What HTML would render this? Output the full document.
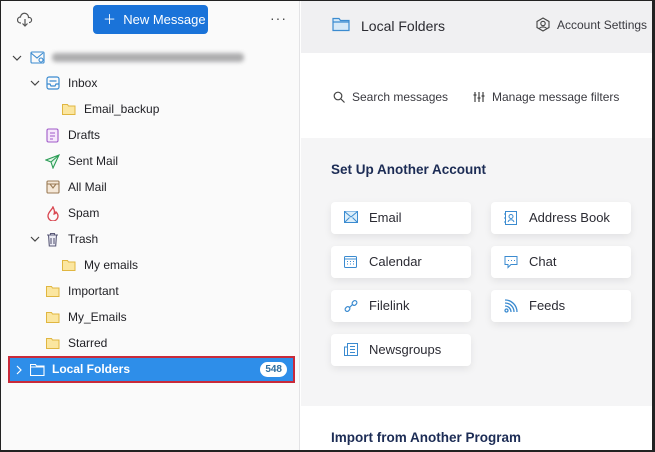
<!DOCTYPE html>
<html><head><style>
*{margin:0;padding:0;box-sizing:border-box}
body{width:655px;height:452px;overflow:hidden;font-family:"Liberation Sans",sans-serif;background:#fff;position:relative}
.frame{position:absolute;inset:0;border:1px solid #222;border-right:3px solid #222;border-bottom:2px solid #222;pointer-events:none;z-index:10}
.left{position:absolute;left:0;top:0;width:300px;height:452px;background:#fafafa;border-right:1px solid #e3e3e5}
.btn{position:absolute;left:93px;top:5px;width:115px;height:29px;background:#1a73d9;border-radius:4px;color:#fff;font-size:13px;line-height:29px;padding-left:10px}
.row{position:absolute;height:20px;font-size:12px;color:#1f1f24;line-height:20px;white-space:nowrap}
.ch{position:absolute}
.sel{position:absolute;left:8px;top:356px;width:287px;height:27px;background:#2e8ee9;border:2px solid #c92a3a;color:#fff;font-weight:bold;font-size:12px;line-height:23px}
.badge{position:absolute;right:6px;top:4px;background:#fff;color:#2e6ea0;border-radius:8px;font-size:10px;line-height:15px;padding:0 5px;font-weight:bold}
.right{position:absolute;left:301px;top:0;width:354px;height:452px}
.hdr{position:absolute;left:0;top:0;width:354px;height:53px;background:#f0f0f2}
.g{position:absolute;left:0;top:138px;width:354px;height:268px;background:#f5f5f6}
.t{position:absolute;font-size:12px;color:#3a3a40;white-space:nowrap}
.card{position:absolute;width:140px;height:32px;background:#fff;border-radius:4px;box-shadow:0 3px 8px rgba(0,0,0,.08);font-size:13px;color:#2b2b33;line-height:32px;padding-left:38px}
.card svg{position:absolute;left:13px;top:9px}
.h2{position:absolute;font-size:13.5px;font-weight:bold;color:#1c2c55;white-space:nowrap}
</style></head><body>
<div class="left">
<svg style="position:absolute;left:17px;top:12px" width="16" height="16" viewBox="0 0 16 16" fill="none" stroke="#555" stroke-width="1.2"><path d="M4 11H3.5a3 3 0 0 1 0-6 4 4 0 0 1 8 0.5 2.5 2.5 0 0 1 1 5H12"/><path d="M8 7v7M5.5 11.5 8 14l2.5-2.5"/></svg>
<div class="btn">＋&nbsp; New Message</div>
<div style="position:absolute;left:270px;top:10px;font-size:14px;color:#444;letter-spacing:1px">···</div>

<svg class="ch" style="left:12px;top:55px" width="10" height="6" viewBox="0 0 10 6" fill="none" stroke="#444" stroke-width="1.2"><path d="M1 1l4 4 4-4"/></svg>
<svg style="position:absolute;left:30px;top:51px" width="16" height="14" viewBox="0 0 16 14" fill="none" stroke="#3b8bd0" stroke-width="1.1"><rect x="1" y="1" width="13" height="11" rx="1"/><path d="M1 2l6 5 6-5"/><circle cx="11" cy="9" r="2"/></svg>
<div style="position:absolute;left:52px;top:53px;width:192px;height:9px;background:#9a9a9c;filter:blur(2px);border-radius:4px;opacity:.8"></div>

<svg class="ch" style="left:30px;top:80px" width="10" height="6" viewBox="0 0 10 6" fill="none" stroke="#444" stroke-width="1.2"><path d="M1 1l4 4 4-4"/></svg>
<svg style="position:absolute;left:46px;top:76px" width="14" height="14" viewBox="0 0 14 14" fill="none" stroke="#3b8bd0" stroke-width="1.2"><rect x="1" y="1" width="12" height="12" rx="2"/><path d="M1 8h3l1 2h4l1-2h3M3.5 5h7"/></svg>
<div class="row" style="left:68px;top:73px">Inbox</div>

<svg style="position:absolute;left:62px;top:103px" width="14" height="12" viewBox="0 0 14 12" fill="#fbe6a0" stroke="#e0b640"><path d="M.5 1.5h5l1 1.5h6.5v8.5H.5z"/></svg>
<div class="row" style="left:84px;top:99px">Email_backup</div>

<svg style="position:absolute;left:46px;top:128px" width="13" height="15" viewBox="0 0 13 15" fill="#f6e8fb" stroke="#a05ac8" stroke-width="1.1"><rect x="1" y="1" width="11" height="13" rx="1.5"/><path d="M4 5h5M4 8h5M4 11h3"/></svg>
<div class="row" style="left:68px;top:125px">Drafts</div>

<svg style="position:absolute;left:45px;top:154px" width="15" height="15" viewBox="0 0 15 15" fill="#e3f6ea" stroke="#2a9c55" stroke-width="1.1"><path d="M14 1 1 6l5 2 2 6z M6 8l8-7"/></svg>
<div class="row" style="left:68px;top:151px">Sent Mail</div>

<svg style="position:absolute;left:46px;top:180px" width="14" height="14" viewBox="0 0 14 14" fill="#f5e8d8" stroke="#9a7a55" stroke-width="1.1"><rect x="1" y="1" width="12" height="12" rx="1"/><path d="M1 4h12M4 4l3 4 3-4"/></svg>
<div class="row" style="left:68px;top:177px">All Mail</div>

<svg style="position:absolute;left:46px;top:206px" width="14" height="15" viewBox="0 0 14 15" fill="none" stroke="#d8454f" stroke-width="1.3"><path d="M7 1c-1 3-5 5-5 9a5 5 0 0 0 10 0c0-2-1-3-2-4-.5 2-1.5 2-2 2 1-2 0-5-1-7z"/></svg>
<div class="row" style="left:68px;top:203px">Spam</div>

<svg class="ch" style="left:30px;top:236px" width="10" height="6" viewBox="0 0 10 6" fill="none" stroke="#444" stroke-width="1.2"><path d="M1 1l4 4 4-4"/></svg>
<svg style="position:absolute;left:46px;top:232px" width="13" height="15" viewBox="0 0 13 15" fill="#ececf5" stroke="#5a5a78" stroke-width="1.1"><path d="M1 3h11M4.5 3V1.5h4V3M2.5 3l.8 11h6.4l.8-11M5 6v6M8 6v6"/></svg>
<div class="row" style="left:68px;top:229px">Trash</div>

<svg style="position:absolute;left:62px;top:259px" width="14" height="12" viewBox="0 0 14 12" fill="#fbe6a0" stroke="#e0b640"><path d="M.5 1.5h5l1 1.5h6.5v8.5H.5z"/></svg>
<div class="row" style="left:84px;top:255px">My emails</div>

<svg style="position:absolute;left:46px;top:285px" width="14" height="12" viewBox="0 0 14 12" fill="#fbe6a0" stroke="#e0b640"><path d="M.5 1.5h5l1 1.5h6.5v8.5H.5z"/></svg>
<div class="row" style="left:68px;top:281px">Important</div>
<svg style="position:absolute;left:46px;top:311px" width="14" height="12" viewBox="0 0 14 12" fill="#fbe6a0" stroke="#e0b640"><path d="M.5 1.5h5l1 1.5h6.5v8.5H.5z"/></svg>
<div class="row" style="left:68px;top:307px">My_Emails</div>
<svg style="position:absolute;left:46px;top:337px" width="14" height="12" viewBox="0 0 14 12" fill="#fbe6a0" stroke="#e0b640"><path d="M.5 1.5h5l1 1.5h6.5v8.5H.5z"/></svg>
<div class="row" style="left:68px;top:333px">Starred</div>

<div class="sel"><svg style="position:absolute;left:6px;top:7px" width="6" height="10" viewBox="0 0 6 10" fill="none" stroke="#fff" stroke-width="1.2"><path d="M1 1l4 4-4 4"/></svg>
<svg style="position:absolute;left:20px;top:5px" width="15" height="13" viewBox="0 0 15 13" fill="none" stroke="#fff" stroke-width="1.1"><path d="M.5 1.5h5l1 1.5h7.5v9.5H.5z M.5 4h14"/></svg>
<span style="position:absolute;left:42px">Local Folders</span><span class="badge">548</span></div>
</div>

<div class="right">
<div class="hdr"></div>
<svg style="position:absolute;left:31px;top:17px" width="18" height="15" viewBox="0 0 18 15" fill="#d6e9f8" stroke="#3b8bd0" stroke-width="1.2"><path d="M1 1.5h6l1.5 2H17v10H1z M1 5h16"/></svg>
<div class="t" style="left:60px;top:18px;font-size:14px;color:#2a2a30">Local Folders</div>
<svg style="position:absolute;left:235px;top:17px" width="14" height="15" viewBox="0 0 14 15" fill="none" stroke="#444" stroke-width="1.1"><path d="M7 1l6 3.5v6L7 14 1 10.5v-6z"/><circle cx="7" cy="6.5" r="2.2"/><path d="M3.5 11.5c1-2 6-2 7 0"/></svg>
<div class="t" style="left:256px;top:18px">Account Settings</div>

<svg style="position:absolute;left:32px;top:91px" width="12" height="12" viewBox="0 0 12 12" fill="none" stroke="#444" stroke-width="1.2"><circle cx="5" cy="5" r="3.8"/><path d="M8 8l3.5 3.5"/></svg>
<div class="t" style="left:51px;top:90px">Search messages</div>
<svg style="position:absolute;left:172px;top:91px" width="12" height="12" viewBox="0 0 12 12" fill="none" stroke="#444" stroke-width="1.2"><path d="M2 1v10M6 1v10M10 1v10M.5 4h3M4.5 7h3M8.5 5h3"/></svg>
<div class="t" style="left:191px;top:90px">Manage message filters</div>

<div class="g"></div>
<div class="h2" style="left:30px;top:162px">Set Up Another Account</div>

<div class="card" style="left:30px;top:202px"><svg width="14" height="12" viewBox="0 0 14 12" fill="#dceefa" stroke="#3b8bd0"><rect x=".5" y=".5" width="13" height="11"/><path d="M.5 .5 7 6l6.5-5.5M.5 11.5l5-5M13.5 11.5l-5-5"/></svg>Email</div>
<div class="card" style="left:190px;top:202px"><svg width="13" height="14" viewBox="0 0 13 14" fill="none" stroke="#3b8bd0"><rect x="1.5" y=".5" width="11" height="13"/><circle cx="7" cy="5.5" r="2"/><path d="M4 11c1-3 5-3 6 0M0 3h2M0 7h2M0 11h2"/></svg>Address Book</div>
<div class="card" style="left:30px;top:246px"><svg width="13" height="13" viewBox="0 0 13 13" fill="none" stroke="#3b8bd0"><rect x=".5" y="1.5" width="12" height="11" rx="1"/><path d="M.5 4h12M3 6.5h1M6 6.5h1M9 6.5h1M3 9h1M6 9h1M9 9h1"/></svg>Calendar</div>
<div class="card" style="left:190px;top:246px"><svg width="14" height="14" viewBox="0 0 14 14" fill="none" stroke="#3b8bd0"><path d="M1 1.5h12v8H7l-3 3v-3H1z"/><path d="M4 5.5h1M7 5.5h1M10 5.5h1"/></svg>Chat</div>
<div class="card" style="left:30px;top:290px"><svg width="14" height="14" viewBox="0 0 14 14" fill="none" stroke="#3b8bd0" stroke-width="1.2"><rect x="1" y="8" width="5" height="4" rx="2" transform="rotate(-45 3.5 10)"/><rect x="8" y="2" width="5" height="4" rx="2" transform="rotate(-45 10.5 4)"/><path d="M5 9l4-4"/></svg>Filelink</div>
<div class="card" style="left:190px;top:290px"><svg width="14" height="14" viewBox="0 0 14 14" fill="none" stroke="#3b8bd0" stroke-width="1.3"><circle cx="2.5" cy="11.5" r="1.5"/><path d="M1 7a6 6 0 0 1 6 6M1 4a9 9 0 0 1 9 9M1 1a12 12 0 0 1 12 12"/></svg>Feeds</div>
<div class="card" style="left:30px;top:334px"><svg width="14" height="13" viewBox="0 0 14 13" fill="none" stroke="#3b8bd0"><rect x="3.5" y=".5" width="10" height="12"/><path d="M3.5 4H.5v8.5h3M6 3.5h5M6 6.5h5M6 9.5h5"/></svg>Newsgroups</div>

<div class="h2" style="left:30px;top:430px">Import from Another Program</div>
</div>
<div class="frame"></div>
</body></html>
